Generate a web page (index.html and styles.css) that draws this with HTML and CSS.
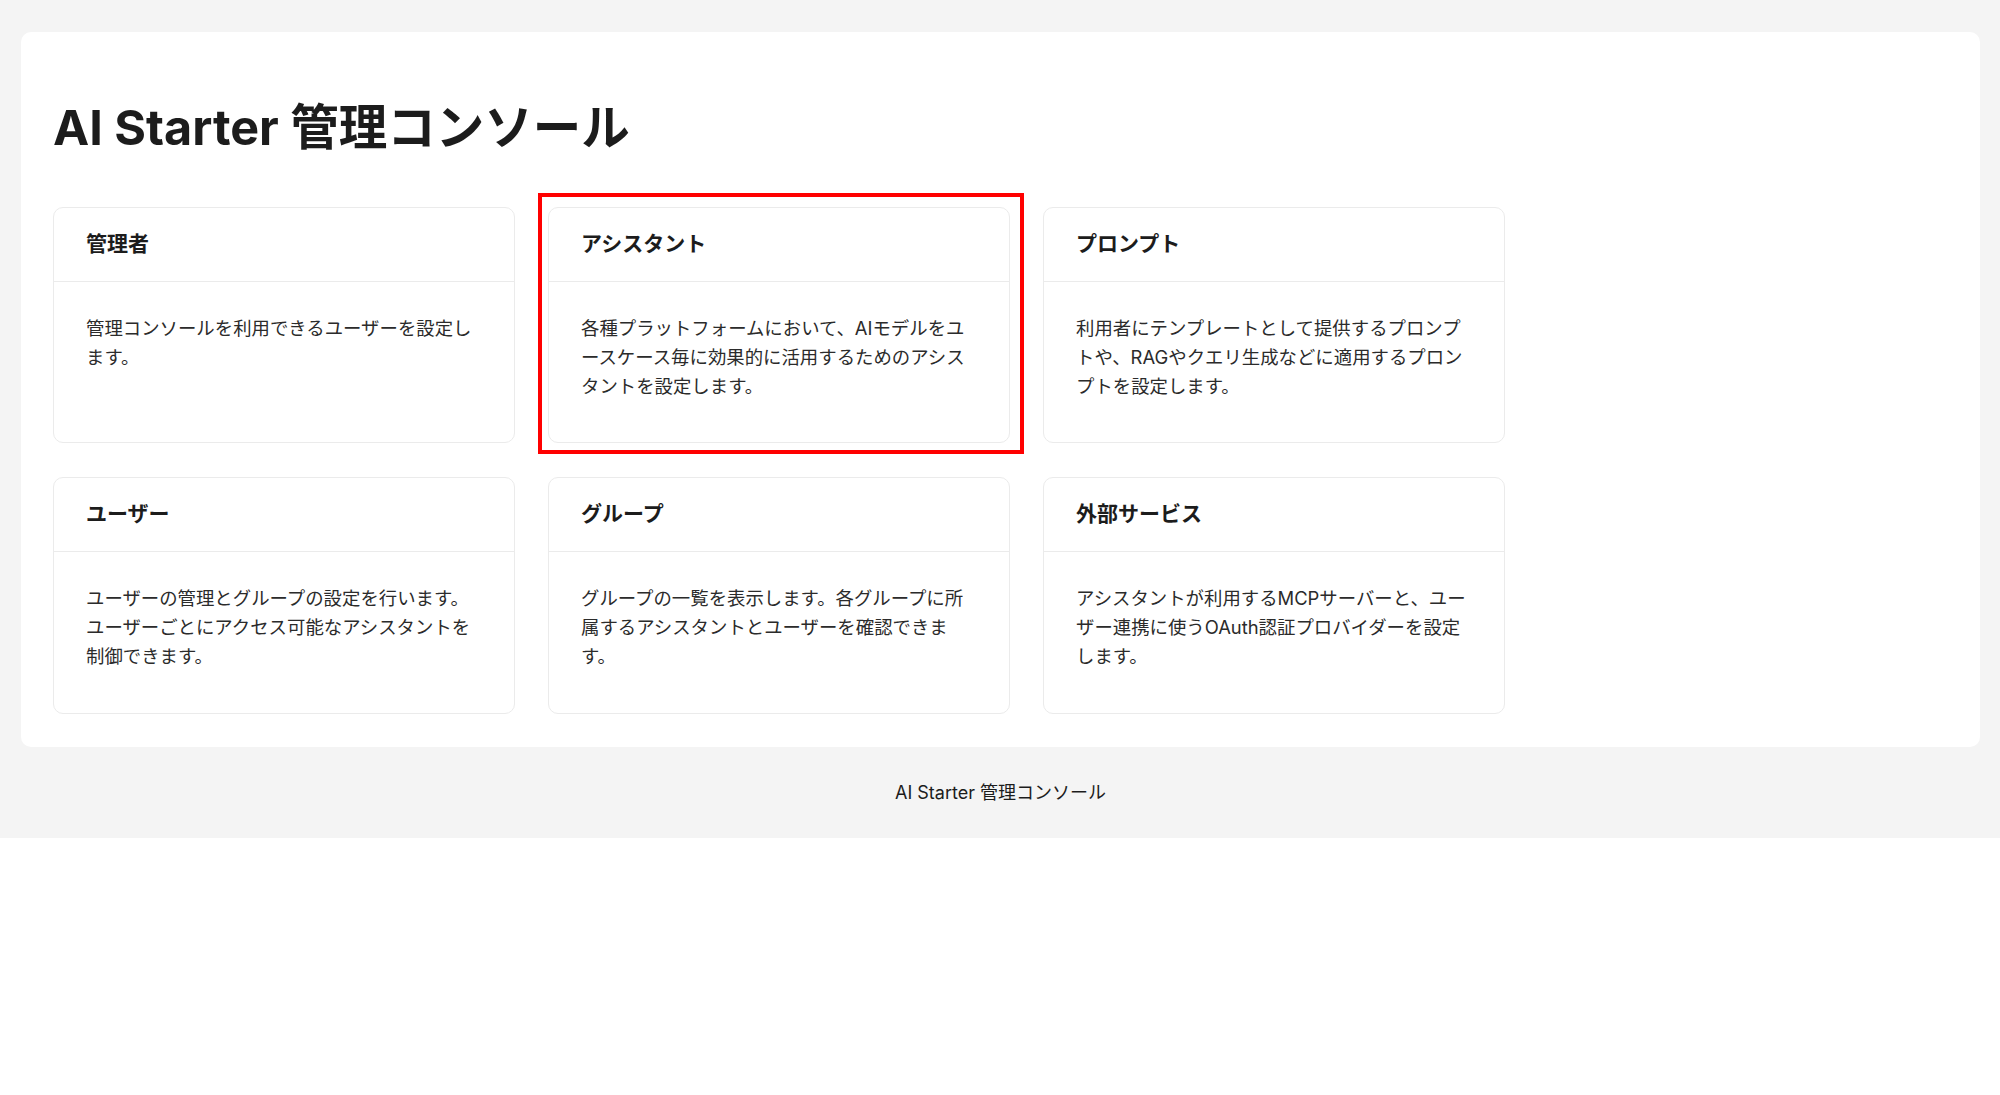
FILE: index.html
```html
<!DOCTYPE html>
<html lang="ja">
<head>
    <meta charset="UTF-8">
    <meta name="viewport" content="width=device-width, initial-scale=1.0">
    <title>AI Starter 管理コンソール</title>
    <link rel="stylesheet" href="styles.css">
</head>
<body>
    <div class="page">
        <main class="panel">
            <h1 class="page-title">AI Starter 管理コンソール</h1>

            <div class="menu-grid">
                <a class="card" href="#admins">
                    <div class="card-header">管理者</div>
                    <div class="card-body">管理コンソールを利用できるユーザーを設定します。</div>
                </a>
                <a class="card card-highlight" href="#assistants">
                    <div class="card-header">アシスタント</div>
                    <div class="card-body">各種プラットフォームにおいて、AIモデルをユースケース毎に効果的に活用するためのアシスタントを設定します。</div>
                </a>
                <a class="card" href="#prompts">
                    <div class="card-header">プロンプト</div>
                    <div class="card-body">利用者にテンプレートとして提供するプロンプトや、RAGやクエリ生成などに適用するプロンプトを設定します。</div>
                </a>
                <a class="card" href="#users">
                    <div class="card-header">ユーザー</div>
                    <div class="card-body">ユーザーの管理とグループの設定を行います。ユーザーごとにアクセス可能なアシスタントを制御できます。</div>
                </a>
                <a class="card" href="#groups">
                    <div class="card-header">グループ</div>
                    <div class="card-body">グループの一覧を表示します。各グループに所属するアシスタントとユーザーを確認できます。</div>
                </a>
                <a class="card" href="#services">
                    <div class="card-header">外部サービス</div>
                    <div class="card-body">アシスタントが利用するMCPサーバーと、ユーザー連携に使うOAuth認証プロバイダーを設定します。</div>
                </a>
            </div>
        </main>

        <footer class="footer">AI Starter 管理コンソール</footer>
    </div>
</body>
</html>
```

FILE: styles.css
```css
body {
    margin: 0;
    background: #ffffff;
    color: #1c1c1c;
    font-family: Inter, "Noto Sans CJK JP", sans-serif;
}

.page {
    background: #f4f4f4;
    padding: 32px 20px 0 21px;
}

.panel {
    background: #ffffff;
    border-radius: 10px;
    padding: 67px 32px 33px;
}

.page-title {
    margin: 0 0 50px;
    font-size: 48.5px;
    line-height: 58px;
    font-weight: 700;
}

.menu-grid {
    display: grid;
    grid-template-columns: repeat(3, 462px);
    gap: 34px 33px;
}

.card {
    position: relative;
    display: block;
    border: 1px solid #ebebeb;
    border-radius: 10px;
    background: #ffffff;
    color: inherit;
    text-decoration: none;
}

.card-header {
    padding: 23px 32px 25px;
    line-height: 25px;
    font-size: 21px;
    font-weight: 700;
    border-bottom: 1px solid #ebebeb;
}

.card-body {
    padding: 32px 33px 42px 32px;
    font-size: 18.4px;
    line-height: 28.8px;
    color: #2b2b2b;
}

/* annotation frame around the selected card */
.card-highlight::after {
    content: "";
    position: absolute;
    top: -15px;
    left: -11px;
    right: -15px;
    bottom: -12px;
    border: 4px solid #ff0000;
    pointer-events: none;
}

.footer {
    padding: 32px 0;
    text-align: center;
    font-size: 18px;
    line-height: 27px;
    color: #1c1c1c;
}
```
